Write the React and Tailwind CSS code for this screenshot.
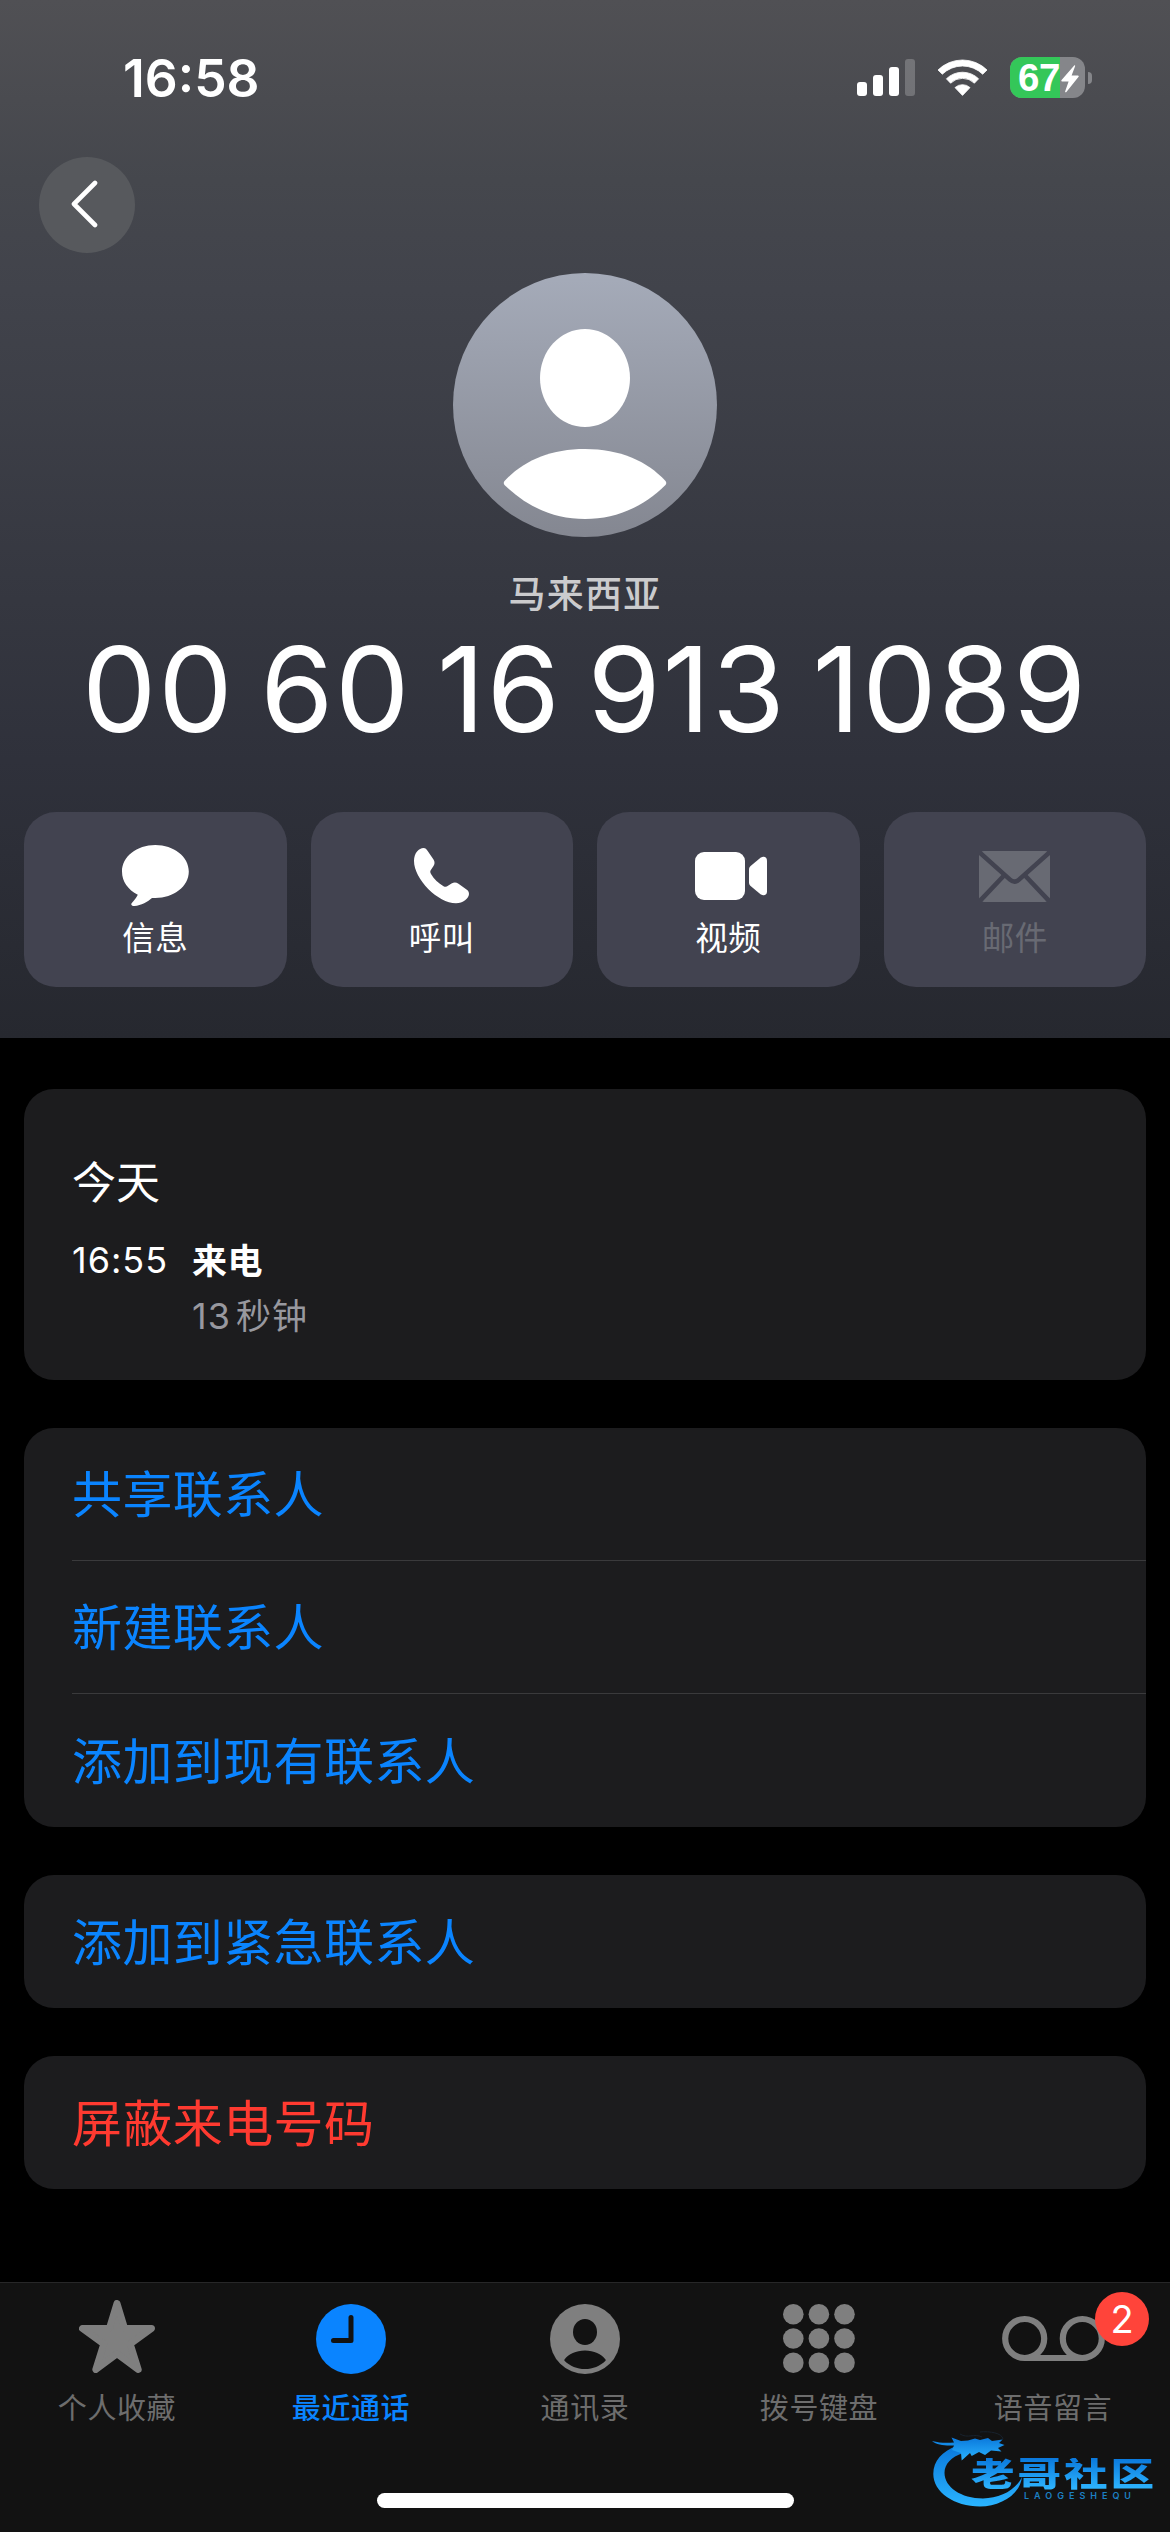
const actions = [
  { label: "信息", icon: MessageIcon },
  { label: "呼叫", icon: PhoneIcon },
  { label: "视频", icon: VideoIcon },
  { label: "邮件", icon: MailIcon, disabled: true },
];

const groups = [
  { items: ["共享联系人", "新建联系人", "添加到现有联系人"] },
  { items: ["添加到紧急联系人"] },
  { items: ["屏蔽来电号码"], danger: true },
];

const tabs = [
  { label: "个人收藏", icon: StarIcon },
  { label: "最近通话", icon: ClockIcon, active: true },
  { label: "通讯录", icon: ContactIcon },
  { label: "拨号键盘", icon: KeypadIcon },
  { label: "语音留言", icon: VoicemailIcon, badge: 2 },
];

function MessageIcon() {
  return (
    <svg width="67" height="62" viewBox="0 0 67 62" fill="currentColor">
      <path d="M33.3 0C51.8 0 66.8 11.6 66.8 26.6S51.8 53 33.3 53H30C26 56.5 19 60.5 12.5 61C9.5 61.2 8.5 59.5 10 57.8C12.5 55 14.5 52.5 15.8 49.8C6 45 0 36.5 0 26.6C0 11.6 14.8 0 33.3 0Z" />
    </svg>
  );
}

function PhoneIcon() {
  return (
    <svg width="56" height="56" viewBox="0 0 56 56" fill="currentColor">
      <path d="M0 13C0 5 5 0 9.5 0C11.5 0 12.5 1.2 13.5 2.8L19.5 11.5C21 14 20.8 16 19.5 18L17 21.8C16 23.3 16 24.3 17 26C20 31 24.5 35.5 29.5 38.2C31.5 39.3 32.5 38.8 34 37.8L37.5 35.6C40 34 42 34 44.5 35.8L52.5 41.5C54 42.6 55 43.8 55 46C55 50 49 55.3 42 55.3C24 55.3 0 31 0 13Z" />
    </svg>
  );
}

function VideoIcon() {
  return (
    <svg className="ml-[5px]" width="72" height="48" viewBox="0 0 72 48" fill="currentColor">
      <rect width="50" height="48" rx="9" />
      <path d="M54 17.5C54 16 54.6 15 55.6 14L65.5 5.8C68.5 3.6 72 4.6 72 8.5V39.5C72 43.4 68.5 44.4 65.5 42.2L55.6 34C54.6 33 54 32 54 30.5Z" />
    </svg>
  );
}

function MailIcon() {
  return (
    <svg width="71" height="51" viewBox="0 0 71 51">
      <rect width="71" height="51" rx="5" fill="currentColor" />
      <g fill="none" stroke="#424350" strokeWidth="4.6">
        <path d="M-1 0L31 28.6Q35.5 32.6 40 28.6L72 0" />
        <path d="M-1 52L25.5 24M72 52L45.5 24" />
      </g>
    </svg>
  );
}

function StarIcon() {
  return (
    <svg className="mb-[5px]" width="76" height="73" viewBox="0 0 76 73" fill="currentColor" stroke="currentColor" strokeWidth="7" strokeLinejoin="round">
      <path d="M38 3.5L45.6 28.5H72.5L51.2 44L59.2 69.5L38 53.8L16.8 69.5L24.8 44L3.5 28.5H30.4Z" />
    </svg>
  );
}

function ClockIcon() {
  return (
    <svg width="70" height="70" viewBox="0 0 70 70">
      <circle cx="35" cy="35" r="35" fill="currentColor" />
      <path d="M35 13.5V36.5H17.5" fill="none" stroke="#121212" strokeWidth="5" strokeLinecap="round" strokeLinejoin="round" />
    </svg>
  );
}

function ContactIcon() {
  return (
    <svg width="70" height="70" viewBox="0 0 70 70">
      <circle cx="35" cy="35" r="35" fill="currentColor" />
      <ellipse cx="35" cy="28" rx="12" ry="13" fill="#121212" />
      <path d="M14.5 55.5C18.5 50 26 46.5 35 46.5S51.5 50 55.5 55.5Q56 56 55.5 56.7C50 62 43 65 35 65S20 62 14.5 56.7Q14 56 14.5 55.5Z" fill="#121212" />
    </svg>
  );
}

function KeypadIcon() {
  const xs = [10.3, 35.9, 61.5];
  const ys = [10.3, 34.5, 58.7];
  return (
    <svg width="72" height="70" viewBox="0 0 72 70" fill="currentColor">
      {ys.map((y) => xs.map((x) => <circle key={`${x}-${y}`} cx={x} cy={y} r="10.3" />))}
    </svg>
  );
}

function VoicemailIcon() {
  return (
    <svg width="103" height="70" viewBox="0 0 103 70" fill="none" stroke="currentColor" strokeWidth="6.2">
      <circle cx="22.7" cy="34.5" r="19.5" />
      <circle cx="80.3" cy="34.5" r="19.5" />
      <path d="M22.7 54H80.3" />
    </svg>
  );
}

function StatusBar() {
  return (
    <div className="flex h-[157px] w-full items-start justify-between pt-[57px] pr-[78px] pl-[123px] text-white">
      <span className="text-[51.5px] leading-[42px] font-semibold">16:58</span>
      <div className="flex h-[41px] items-center">
        <svg width="58" height="38" viewBox="0 0 58 38" fill="#fff">
          <rect y="23" width="10" height="14" rx="3" />
          <rect x="16" y="16" width="10" height="21" rx="3" />
          <rect x="32" y="8" width="10" height="29" rx="3" />
          <rect x="48" width="10" height="37" rx="3" opacity="0.22" />
        </svg>
        <svg className="ml-[22px]" width="51" height="38" viewBox="0 0 51 38" fill="#fff" stroke="#fff" strokeWidth="0.8" strokeLinejoin="round">
          <path d="M1 11A35 35 0 0 1 50 11L45.7 15.2A29 29 0 0 0 5.3 15.2Z" />
          <path d="M9.4 19.8A23 23 0 0 1 41.6 19.8L37.4 24.2A17 17 0 0 0 13.6 24.2Z" />
          <path d="M18 28.6A11 11 0 0 1 33 28.6L25.5 36.4Z" />
        </svg>
        <div className="relative ml-[22px] h-[41px] w-[75px] rounded-[12px] bg-[#85868a]">
          <div className="flex h-full w-[50px] items-center rounded-l-[12px] bg-[#34c759] pl-[8px]">
            <span className="font-['Liberation_Sans',sans-serif] text-[38.5px] leading-[40px] font-bold tracking-[-0.5px]">67</span>
          </div>
          <svg className="absolute top-[8px] left-[51px]" width="18" height="28" viewBox="0 0 18 28" fill="#fff">
            <path d="M13.2 0.4C14 -0.2 14.4 0.4 14 1.4L10.6 10.6H16.8C17.8 10.6 18 11.4 17.4 12.1L5.4 27C4.6 27.8 3.8 27.2 4.2 26.2L7.6 16.4H1.2C0.2 16.4 0 15.6 0.6 14.9Z" />
          </svg>
        </div>
        <div className="ml-[3px] h-[12px] w-[4px] rounded-r-full bg-[#85868a]" />
      </div>
    </div>
  );
}

function Avatar() {
  return (
    <svg className="mt-[20px]" width="264" height="264" viewBox="0 0 264 264">
      <defs>
        <linearGradient id="avatar" x1="0" y1="0" x2="0" y2="1">
          <stop offset="0" stopColor="#a5abb9" />
          <stop offset="1" stopColor="#848791" />
        </linearGradient>
      </defs>
      <circle cx="132" cy="132" r="132" fill="url(#avatar)" />
      <ellipse cx="132" cy="105" rx="45" ry="49" fill="#fff" />
      <path d="M51.5 208C70 188 97 176 132 176S194 188 212.5 208Q214 210 212.5 212C190 234 163 246 132 246S74 234 51.5 212Q50 210 51.5 208Z" fill="#fff" />
    </svg>
  );
}

function CommunityLogo() {
  return (
    <div className="absolute top-[148px] left-[932px] h-[80px] w-[224px]">
      <svg width="92" height="78" viewBox="0 0 92 78">
        <defs>
          <linearGradient id="dragon" x1="0" y1="0" x2="0" y2="1">
            <stop offset="0" stopColor="#0a78dc" />
            <stop offset="1" stopColor="#2ab4ff" />
          </linearGradient>
        </defs>
        <g fill="url(#dragon)">
          <path d="M25 15C10 20 1.3 30 1.3 43C1.3 61 22 75.5 48 75.5C68 75.5 88 64 90 46C84 59 68 67.5 51 67.5C29 67.5 12.5 56 12.5 42C12.5 33 19 26 31 22L39 18Z" />
          <path d="M0 10C8 12 14 12 22 11.5L19.5 6.5L29 10L36 9.5L43 7.5L48 9L56 7L60 10L70.7 8.5L67 12L72.5 14L66 17L69.5 20.5L59 19.5L53 24L47 21L39.7 25L38 22L29.7 29.5L29 22L20 19L22 14.5C13 15 5 14 0 10Z" />
        </g>
        <path d="M28 3C36 8 42 2 50 6M48 1C58 0 70 2 71 8" fill="none" stroke="#18222d" strokeWidth="1" />
      </svg>
      <span className="absolute top-[27px] left-[39px] origin-left scale-x-[1.32] bg-gradient-to-b from-[#0a78dc] to-[#2fb6ff] bg-clip-text text-[33px] leading-[32px] font-black tracking-[2.2px] whitespace-nowrap text-transparent">
        老哥社区
      </span>
      <span className="absolute top-[60px] left-[92px] text-[9px] leading-[10px] font-semibold tracking-[5px] text-[#1c80c4]">LAOGESHEQU</span>
    </div>
  );
}

export default function App() {
  return (
    <main className="flex h-[2532px] w-[1170px] flex-col overflow-hidden bg-black font-['Inter','Noto_Sans_CJK_SC',sans-serif] text-white">
      <header className="flex h-[1038px] flex-none flex-col items-center bg-[linear-gradient(180deg,#505054_0px,#4a4b50_100px,#45474d_180px,#41434b_290px,#353740_600px,#2f313b_760px,#26282f_1038px)]">
        <StatusBar />
        <div className="flex h-[96px] w-full pl-[39px]">
          <button className="flex size-[96px] items-center justify-center rounded-full bg-[#57595d]">
            <svg className="mr-[6px] mb-[2px]" width="28" height="48" viewBox="0 0 28 48" fill="none" stroke="#fff" strokeWidth="4.6" strokeLinecap="round" strokeLinejoin="round">
              <path d="M25 3L4 24L25 45" />
            </svg>
          </button>
        </div>
        <Avatar />
        <p className="mt-[33px] text-[37px] leading-[50px] font-medium tracking-[1.3px] text-[#cbcbcd]">马来西亚</p>
        <h1 className="mt-[9px] text-[118px] leading-[120px] font-normal tracking-[1.7px] whitespace-nowrap [word-spacing:-9px]">00 60 16 913 1089</h1>
        <div className="mt-[63px] grid w-full grid-cols-4 gap-6 px-6">
          {actions.map(({ label, icon: Icon, disabled }) => (
            <button key={label} className={`flex h-[175px] flex-col items-center rounded-[32px] bg-[#424350] pt-[30px] ${disabled ? "text-[#686a73]" : "text-white"}`}>
              <span className="flex h-[68px] items-center">
                <Icon />
              </span>
              <span className="mt-[7px] text-[32.5px] leading-[44px] tracking-[0.5px]">{label}</span>
            </button>
          ))}
        </div>
      </header>

      <section className="flex flex-1 flex-col gap-12 px-6 pt-[51px]">
        <div className="h-[291px] rounded-[30px] bg-[#1c1c1e] px-12 pt-[66px]">
          <h2 className="text-[44px] leading-[56px]">今天</h2>
          <div className="mt-[21px] flex text-[36px] leading-[56px]">
            <span className="w-[120px] tracking-[1px]">16:55</span>
            <div>
              <p className="pt-px text-[35px] font-semibold tracking-[0.5px]">来电</p>
              <p className="-mt-px tracking-[1px] text-[#98989f]">
                13<span className="ml-[5px] text-[35px]">秒钟</span>
              </p>
            </div>
          </div>
        </div>

        {groups.map((group) => (
          <div key={group.items[0]} className="rounded-[30px] bg-[#1c1c1e] pl-12">
            {group.items.map((item) => (
              <div key={item} className={`flex h-[133px] items-center border-[#3a3a3c] pt-[3px] text-[50px] tracking-[0.4px] not-last:border-b ${group.danger ? "text-[#ff3a30]" : "text-[#0a84ff]"}`}>
                {item}
              </div>
            ))}
          </div>
        ))}
      </section>

      <nav className="relative h-[250px] flex-none border-t border-[#272728] bg-[#121212]">
        <div className="grid grid-cols-5">
          {tabs.map(({ label, icon: Icon, active, badge }) => (
            <div key={label} className={`relative flex flex-col items-center pt-[17px] ${active ? "text-[#0a84ff]" : "text-[#7f7f7f]"}`}>
              <span className="flex h-[78px] items-center">
                <Icon />
              </span>
              <span className={`mt-[13px] text-[29px] leading-[36px] tracking-[0.6px] ${active ? "font-medium" : "text-[#6d6d6d]"}`}>{label}</span>
              {badge ? (
                <span className="absolute top-[9px] left-[159px] flex size-[54px] items-center justify-center rounded-full bg-[#ff443a] text-[38px] leading-none text-white">{badge}</span>
              ) : null}
            </div>
          ))}
        </div>
        <div className="mx-auto mt-[66px] h-[15px] w-[417px] rounded-full bg-white" />
        <CommunityLogo />
      </nav>
    </main>
  );
}
